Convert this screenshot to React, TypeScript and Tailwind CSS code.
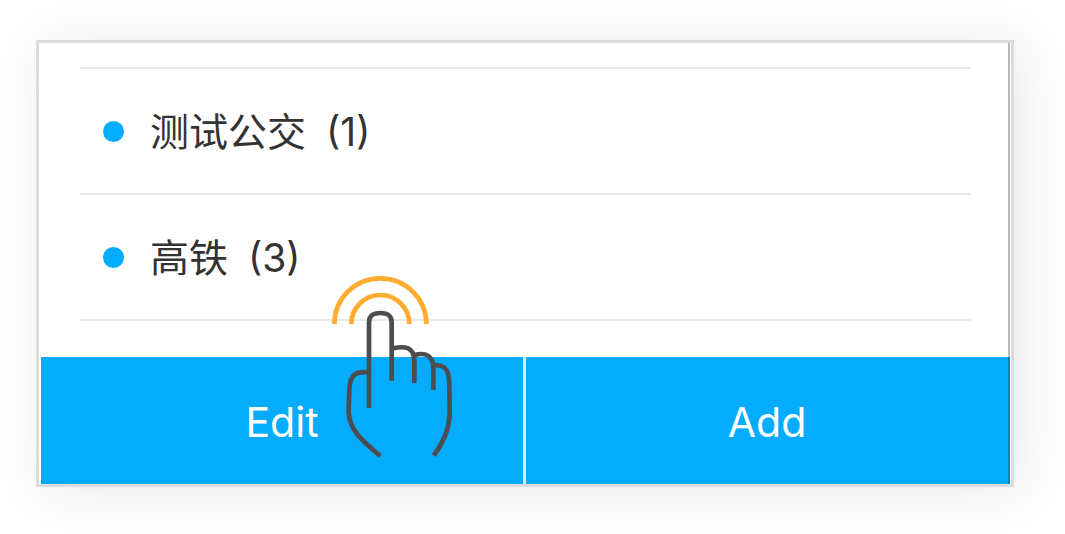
const groups = [
  { name: "测试公交", count: 1 },
  { name: "高铁", count: 3 },
];

function TapHand() {
  return (
    <svg
      aria-hidden="true"
      viewBox="0 0 450 615"
      fill="none"
      className="pointer-events-none absolute bottom-[14px] left-[281px] h-[205px] w-[150px]"
    >
      <g stroke="#ffac2f" strokeWidth="14">
        <path d="M43 177A138 137 0 0 1 319 177" />
        <path d="M94 177A87 87 0 0 1 268 177" />
      </g>
      <g stroke="#4d4d4d" strokeWidth="14">
        <path d="M147 429V173C147 152 158 144 181 144S215 152 215 173V347" />
        <path d="M215 251C256 241 283 246 283 289V354" />
        <path d="M284 270C318 261 340 273 340 310V375" />
        <path d="M341 301C377 298 387 317 388 357L389 445C388 493 370 533 341 572" />
        <path d="M147 322C105 318 91 330 88 370L86 440C87 493 123 525 181 573" />
      </g>
    </svg>
  );
}

export default function App() {
  return (
    <main className="bg-white pt-10 pr-[51px] pb-[47px] pl-9 font-['Inter','Noto_Sans_CJK_SC',sans-serif]">
      <section className="relative border-[3px] border-[#dcdcdc] bg-white pr-px pl-0.5 shadow-[8px_4px_50px_rgba(0,0,0,0.09)]">
        <div className="border-r-2 border-[#b8b8b8] pt-6 pr-[37px] pb-9 pl-[39px]">
          <ul className="border-t-2 border-[#e9e9e9]">
            {groups.map((group) => (
              <li
                key={group.name}
                className="flex h-[126px] items-center gap-[26px] border-b-2 border-[#e9e9e9] pl-[23px] text-[39px] leading-[60px] text-[#333]"
              >
                <span className="size-[21px] shrink-0 rounded-full bg-[#03acff]" />
                <span className="flex gap-5 pt-0.5">
                  <span>{group.name}</span>
                  <span>({group.count})</span>
                </span>
              </li>
            ))}
          </ul>
        </div>
        <div className="flex h-[127px] gap-[3px] border-r-2 border-[#0c83bd] bg-[#d5f0fd] text-[41px] leading-[60px] text-white">
          <button type="button" className="flex-1 bg-[#03acff] pt-0.5">
            Edit
          </button>
          <button type="button" className="flex-1 bg-[#03acff] pt-0.5">
            Add
          </button>
        </div>
        <TapHand />
      </section>
    </main>
  );
}
